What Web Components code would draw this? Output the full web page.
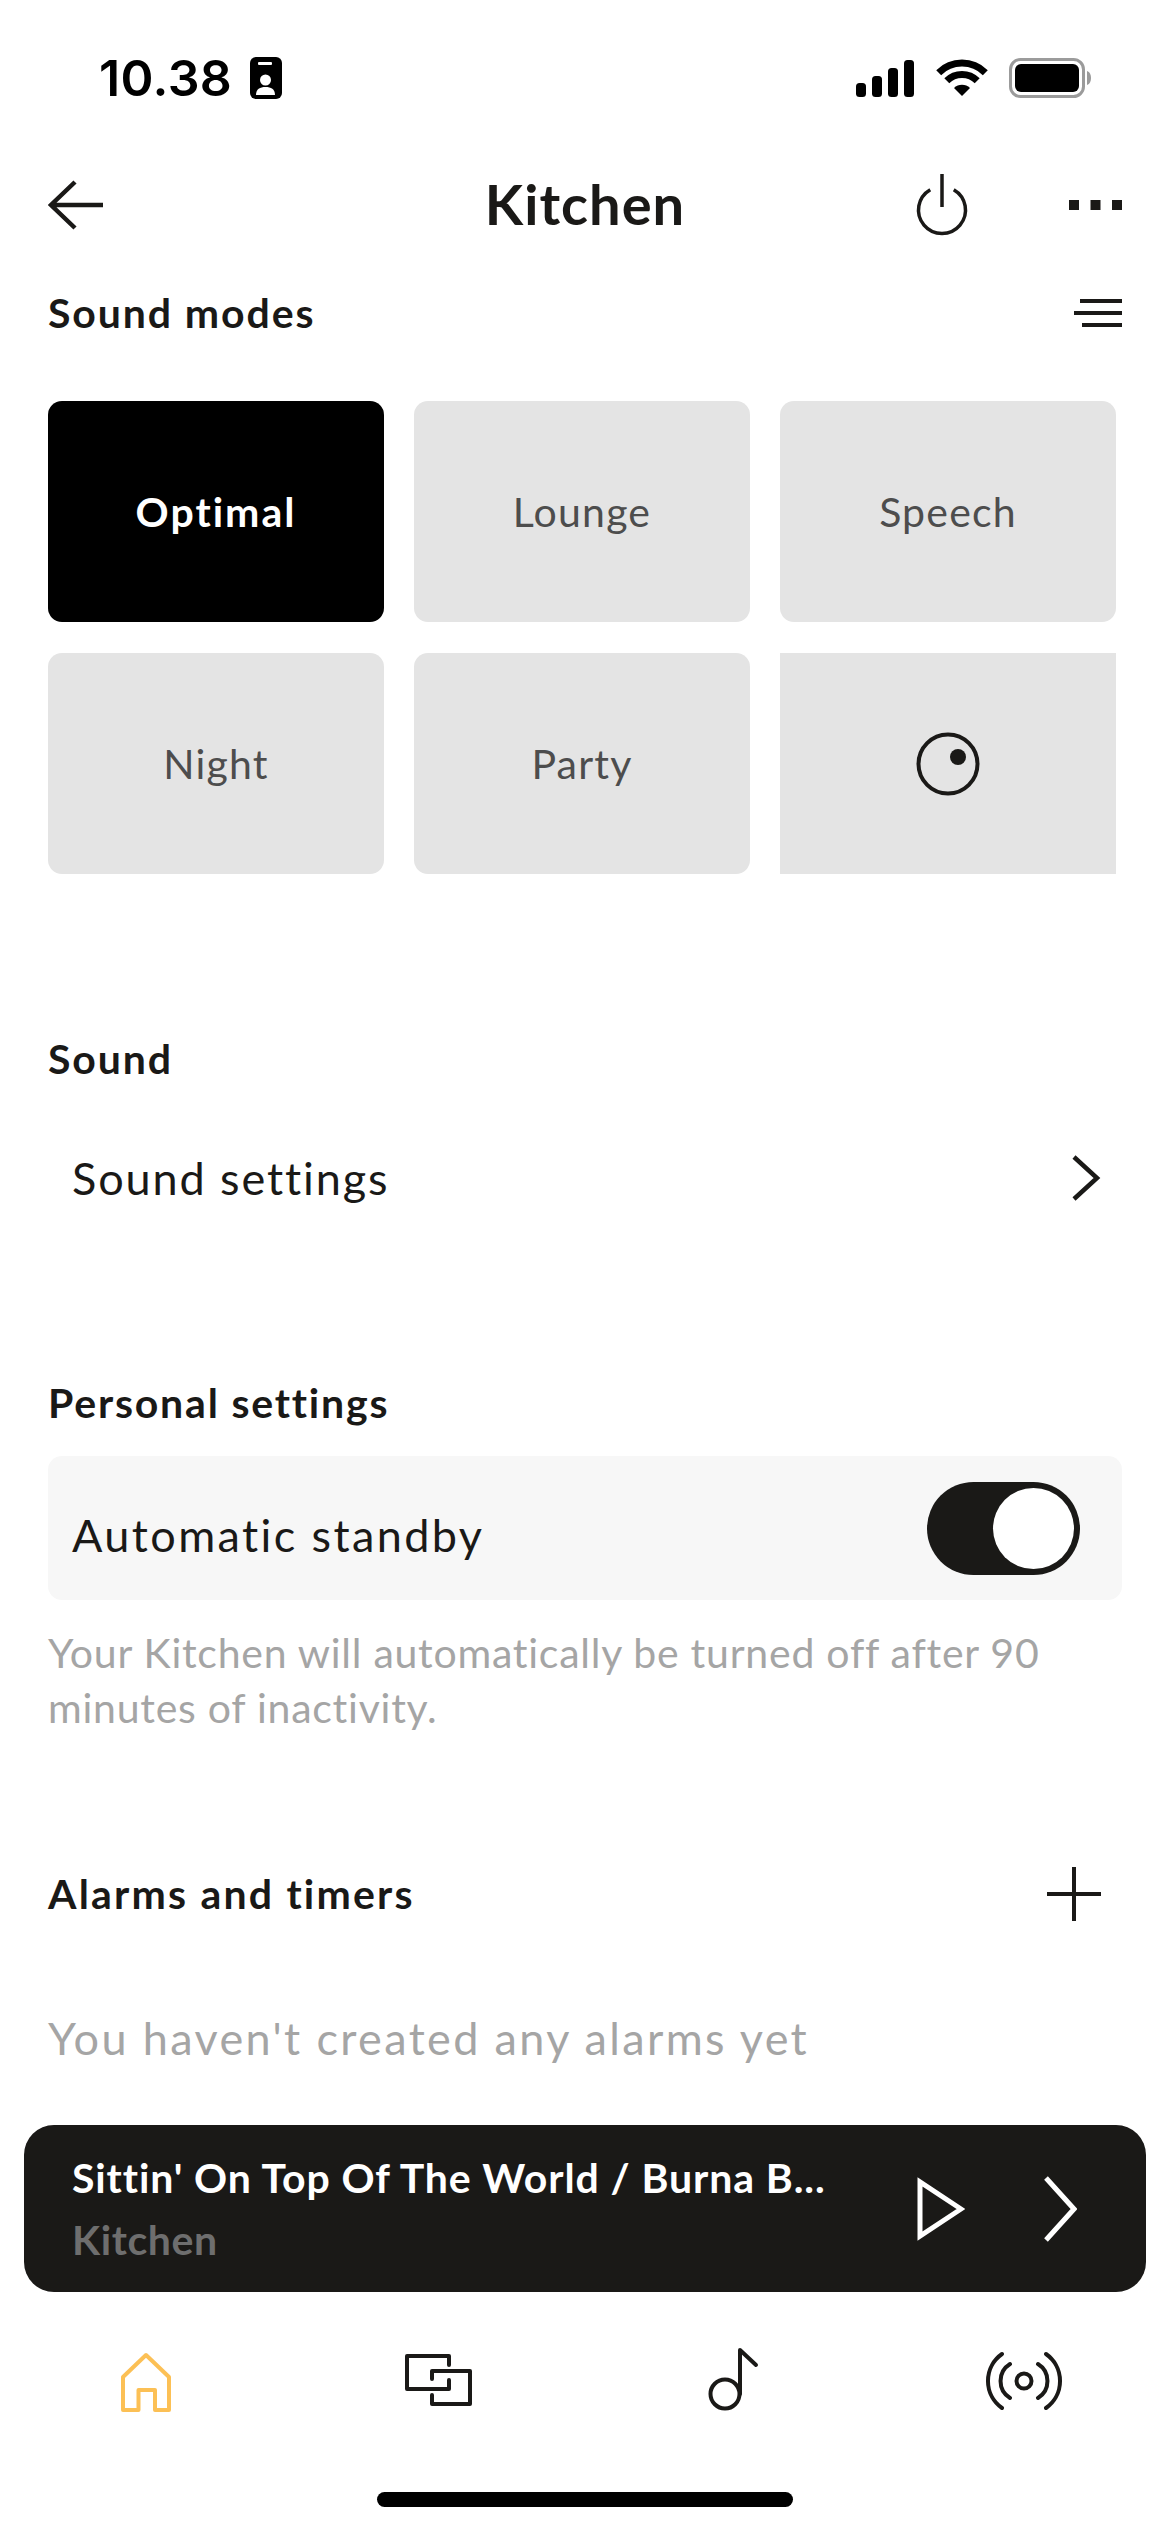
<!DOCTYPE html>
<html lang="en">
<head>
<meta charset="utf-8">
<title>Kitchen</title>
<style>
  html, body { margin: 0; padding: 0; background: #fff; }
  body { width: 1170px; height: 2532px; overflow: hidden; font-family: Lato, "Liberation Sans", sans-serif; color: #1a1917; }
  main { display: block; padding: 0 48px; }
</style>
</head>
<body>
<status-bar></status-bar>
<nav-header>Kitchen</nav-header>
<main>
  <section-head style="margin-top: 28px">Sound modes
    <svg slot="action" width="48" height="30" viewBox="0 0 48 30" fill="none" stroke="#1a1917" stroke-width="4"><path d="M6 3H48M0 15H48M8 27H48"/></svg>
  </section-head>
  <mode-grid style="margin-top: 58px">
    <mode-tile active>Optimal</mode-tile>
    <mode-tile>Lounge</mode-tile>
    <mode-tile>Speech</mode-tile>
    <mode-tile>Night</mode-tile>
    <mode-tile>Party</mode-tile>
    <mode-tile square>
      <svg width="66" height="66" viewBox="0 0 66 66" fill="none" stroke="#1a1917" stroke-width="4"><circle cx="33" cy="33" r="29.5"/><circle cx="43" cy="26" r="8" fill="#1a1917" stroke="none"/></svg>
    </mode-tile>
  </mode-grid>
  <section-head style="margin-top: 155px">Sound</section-head>
  <link-row style="margin-top: 44px">Sound settings</link-row>
  <section-head style="margin-top: 150px; letter-spacing: 1.8px">Personal settings</section-head>
  <toggle-row style="margin-top: 23px">Automatic standby</toggle-row>
  <help-text style="margin-top: 25px">Your Kitchen will automatically be turned off after 90 minutes of inactivity.</help-text>
  <section-head style="margin-top: 129px; letter-spacing: 2.2px">Alarms and timers
    <svg slot="action" width="56" height="56" viewBox="0 0 56 56" fill="none" stroke="#1a1917" stroke-width="4" style="margin-right: 20px"><path d="M28 1V55M1 28H55"/></svg>
  </section-head>
  <empty-note style="margin-top: 84px">You haven't created any alarms yet</empty-note>
</main>
<mini-player title-text="Sittin' On Top Of The World / Burna B..." room="Kitchen"></mini-player>
<tab-bar></tab-bar>
<home-indicator></home-indicator>

<script>
/**
 * Each screen part is its own custom element, the markup is kept in the class.
 */
function shadow (host, html) {
  host.attachShadow({ mode: 'open' }).innerHTML = html
}

customElements.define('status-bar', class extends HTMLElement {
  connectedCallback () {
    shadow(this, `
      <style>
        :host { display: flex; align-items: flex-start; height: 155px; padding: 57px 78px 0 99px; box-sizing: border-box; }
        .time { font: 600 50px/42px Inter, sans-serif; letter-spacing: 0.4px; color: #000; }
        .badge { margin-left: 18px; }
        .right { margin-left: auto; display: flex; align-items: center; height: 42px; }
        .wifi { margin-left: 22px; }
        .batt { margin-left: 21px; }
      </style>
      <span class="time">10.38</span>
      <svg class="badge" width="32" height="42" viewBox="0 0 32 42">
        <rect width="32" height="42" rx="6" fill="#000"/>
        <rect x="8" y="5" width="14" height="3" rx="1" fill="#fff"/>
        <circle cx="15.5" cy="23" r="5.5" fill="#fff"/>
        <path d="M6 38C6 32 10 30 15.5 30S25 32 25 38Z" fill="#fff"/>
      </svg>
      <div class="right">
        <svg width="58" height="37" viewBox="0 0 58 37" fill="#000">
          <rect y="23" width="10" height="14" rx="3.5"/>
          <rect x="16" y="16" width="10" height="21" rx="3.5"/>
          <rect x="32" y="8" width="10" height="29" rx="3.5"/>
          <rect x="48" width="10" height="37" rx="3.5"/>
        </svg>
        <svg class="wifi" width="52" height="38" viewBox="0 0 52 38">
          <path d="M2.7 13.7A33 33 0 0 1 49.3 13.7M10.8 21.8A21.5 21.5 0 0 1 41.2 21.8" fill="none" stroke="#000" stroke-width="7"/>
          <path d="M26 37L18 29A11.5 11.5 0 0 1 34 29Z" fill="#000"/>
        </svg>
        <svg class="batt" width="83" height="40" viewBox="0 0 83 40">
          <rect x="1.5" y="1.5" width="73" height="37" rx="10" fill="none" stroke="#9b9b9b" stroke-width="3"/>
          <rect x="6" y="6" width="64" height="28" rx="6" fill="#000"/>
          <path d="M78 13C81 14 82 17 82 20S81 26 78 27Z" fill="#9b9b9b"/>
        </svg>
      </div>
    `)
  }
})

customElements.define('nav-header', class extends HTMLElement {
  connectedCallback () {
    shadow(this, `
      <style>
        :host { display: grid; grid-template-columns: 1fr auto 1fr; align-items: center; height: 100px; padding: 0 48px; }
        .title { font: 700 56px/96px Lato, sans-serif; letter-spacing: 1px; color: #1a1917; margin-bottom: 2px; }
        .right { display: flex; justify-content: flex-end; align-items: center; gap: 98px; }
      </style>
      <svg width="60" height="52" viewBox="0 0 60 52" fill="none" stroke="#1a1917" stroke-width="4.5"><path d="M27 3L3 26L27 49M3 26H55"/></svg>
      <span class="title"><slot></slot></span>
      <div class="right">
        <svg width="58" height="68" viewBox="0 0 58 68" fill="none" stroke="#1a1917" stroke-width="3.5"><path d="M17.25 18.65A23.5 23.5 0 1 0 40.75 18.65M29 3V36"/></svg>
        <svg width="53" height="10" viewBox="0 0 53 10" fill="#1a1917"><rect width="10" height="10"/><rect x="21.5" width="10" height="10"/><rect x="43" width="10" height="10"/></svg>
      </div>
    `)
  }
})

customElements.define('section-head', class extends HTMLElement {
  connectedCallback () {
    shadow(this, `
      <style>
        :host { display: flex; justify-content: space-between; align-items: center; height: 60px; font: 700 41px/60px Lato, sans-serif; letter-spacing: 1.9px; color: #1a1917; }
      </style>
      <span><slot></slot></span>
      <slot name="action"></slot>
    `)
  }
})

customElements.define('mode-grid', class extends HTMLElement {
  connectedCallback () {
    shadow(this, `
      <style>
        :host { display: grid; grid-template-columns: repeat(3, 336px); grid-auto-rows: 221px; gap: 31px 30px; }
      </style>
      <slot></slot>
    `)
  }
})

customElements.define('mode-tile', class extends HTMLElement {
  connectedCallback () {
    shadow(this, `
      <style>
        :host { display: flex; align-items: center; justify-content: center; background: #e4e4e4; border-radius: 14px; font: 400 41px/50px Lato, sans-serif; letter-spacing: 1.2px; color: #4d4d4d; }
        :host([active]) { background: #000; color: #fff; font-weight: 700; letter-spacing: 2px; }
        :host([square]) { border-radius: 0; }
      </style>
      <slot></slot>
    `)
  }
})

customElements.define('link-row', class extends HTMLElement {
  connectedCallback () {
    shadow(this, `
      <style>
        :host { display: flex; justify-content: space-between; align-items: center; height: 90px; padding: 0 21px 0 24px; font: 400 45px/90px Lato, sans-serif; letter-spacing: 1.9px; color: #1a1917; }
      </style>
      <span><slot></slot></span>
      <svg width="30" height="46" viewBox="0 0 30 46" fill="none" stroke="#1a1917" stroke-width="4.5"><path d="M3 2L26 23L3 44"/></svg>
    `)
  }
})

customElements.define('toggle-row', class extends HTMLElement {
  connectedCallback () {
    shadow(this, `
      <style>
        :host { display: flex; justify-content: space-between; align-items: center; height: 144px; padding: 0 42px 0 24px; background: #f7f7f7; border-radius: 14px; font: 400 45px/90px Lato, sans-serif; letter-spacing: 2.4px; color: #1a1917; }
        .label { padding-top: 14px; }
        .track { display: flex; justify-content: flex-end; align-items: center; width: 153px; height: 93px; padding: 6px; box-sizing: border-box; border-radius: 47px; background: #1a1917; }
        .knob { width: 81px; height: 81px; border-radius: 50%; background: #fff; }
      </style>
      <span class="label"><slot></slot></span>
      <div class="track"><div class="knob"></div></div>
    `)
  }
})

customElements.define('help-text', class extends HTMLElement {
  connectedCallback () {
    shadow(this, `
      <style>
        :host { display: block; font: 400 41px/55px Lato, sans-serif; letter-spacing: 0.75px; color: #a5a5a5; }
      </style>
      <slot></slot>
    `)
  }
})

customElements.define('empty-note', class extends HTMLElement {
  connectedCallback () {
    shadow(this, `
      <style>
        :host { display: block; font: 400 45px/60px Lato, sans-serif; letter-spacing: 2.36px; color: #a5a5a5; }
      </style>
      <slot></slot>
    `)
  }
})

customElements.define('mini-player', class extends HTMLElement {
  connectedCallback () {
    shadow(this, `
      <style>
        :host { display: flex; align-items: center; height: 167px; margin: 57px 24px 0; padding: 0 69px 0 48px; box-sizing: border-box; background: #1a1917; border-radius: 30px; }
        .text { flex: 1; min-width: 0; }
        .title { font: 700 41px/60px Lato, sans-serif; letter-spacing: 0.9px; color: #fff; white-space: nowrap; }
        .room { font: 700 41px/60px Lato, sans-serif; letter-spacing: 0.6px; color: #6e6e6e; margin-top: 2px; }
        .play { margin-right: 78px; }
      </style>
      <div class="text">
        <div class="title">${this.getAttribute('title-text')}</div>
        <div class="room">${this.getAttribute('room')}</div>
      </div>
      <svg class="play" width="48" height="64" viewBox="0 0 48 64" fill="none" stroke="#fff" stroke-width="5"><path d="M3 5V59L44 32Z"/></svg>
      <svg width="34" height="66" viewBox="0 0 34 66" fill="none" stroke="#fff" stroke-width="5"><path d="M3 2L31 33L3 64"/></svg>
    `)
  }
})

customElements.define('tab-bar', class extends HTMLElement {
  connectedCallback () {
    shadow(this, `
      <style>
        :host { display: grid; grid-template-columns: repeat(4, 1fr); align-items: center; justify-items: center; height: 178px; }
        svg { fill: none; stroke: #1a1917; stroke-width: 4; stroke-linecap: round; stroke-linejoin: round; }
      </style>
      <svg width="54" height="64" viewBox="0 0 54 64" style="stroke: #fcc055"><path d="M27 6L4 28V61H19.5V41H36V61H50V28Z"/></svg>
      <svg width="80" height="64" viewBox="0 0 80 64"><path d="M50 16V7H8V40H50V31M33 30V22H71V55H33V46"/></svg>
      <svg width="66" height="80" viewBox="0 0 66 80"><circle cx="27" cy="53" r="14.5"/><path d="M42 53V9L58 24"/></svg>
      <svg width="80" height="64" viewBox="0 0 80 64"><circle cx="40" cy="32" r="7.5"/><path d="M26 15A20 20 0 0 0 26 49M54 15A20 20 0 0 1 54 49M18 5A33 33 0 0 0 18 59M62 5A33 33 0 0 1 62 59"/></svg>
    `)
  }
})

customElements.define('home-indicator', class extends HTMLElement {
  connectedCallback () {
    shadow(this, `
      <style>
        :host { display: block; width: 416px; height: 15px; margin: 22px auto 0; background: #000; border-radius: 8px; }
      </style>
    `)
  }
})
</script>
</body>
</html>
